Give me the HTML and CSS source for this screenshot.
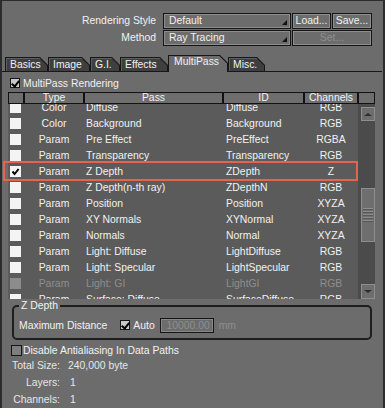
FILE: index.html
```html
<!DOCTYPE html>
<html lang="en">
<head>
    <meta charset="UTF-8">
    <title>Render Options</title>
    <link rel="stylesheet" href="styles.css">
</head>
<body>
    <div class="window">
        <div class="style-box">
            <div class="setting-row">
                <span class="setting-label">Rendering Style</span>
                <div class="select"><span>Default</span><span class="drop"></span></div>
                <button class="btn">Load...</button>
                <button class="btn save">Save...</button>
            </div>
            <div class="setting-row">
                <span class="setting-label">Method</span>
                <div class="select"><span>Ray Tracing</span><span class="drop"></span></div>
                <button class="btn set" disabled>Set...</button>
            </div>
        </div>

        <div class="tabs">
            <div class="tab first" style="width:43px"><span>Basics</span></div>
            <div class="tab" style="width:42px"><span>Image</span></div>
            <div class="tab" style="width:30px"><span>G.I.</span></div>
            <div class="tab" style="width:48px"><span>Effects</span></div>
            <div class="tab active" style="width:60px"><span>MultiPass</span></div>
            <div class="tab" style="width:37px"><span>Misc.</span></div>
        </div>

        <div class="check-row multipass">
            <span class="check on"></span>
            <span>MultiPass Rendering</span>
        </div>

        <div class="table">
            <div class="thead">
                <div class="th"></div>
                <div class="th">Type</div>
                <div class="th">Pass</div>
                <div class="th">ID</div>
                <div class="th">Channels</div>
                <div class="th"></div>
            </div>
            <div class="tbody">
                <div class="list-view">
                    <div class="rows" id="rows"></div>
                </div>
                <div class="scrollbar">
                    <div class="sb-btn up"><span></span></div>
                    <div class="thumb"><span class="grip"></span></div>
                    <div class="sb-btn down"><span></span></div>
                </div>
            </div>
            <div class="highlight"></div>
        </div>

        <fieldset class="group">
            <legend>Z Depth</legend>
            <div class="distance-row">
                <span>Maximum Distance</span>
                <span class="check on auto-check"></span>
                <span class="auto-label">Auto</span>
                <span class="num-input">10000.00</span>
                <span class="unit">mm</span>
            </div>
        </fieldset>

        <div class="check-row antialias">
            <span class="check off"></span>
            <span>Disable Antialiasing In Data Paths</span>
        </div>

        <div class="info">
            <div class="info-row"><span class="info-label">Total Size:</span><span>240,000 byte</span></div>
            <div class="info-row"><span class="info-label">Layers:</span><span class="info-num">1</span></div>
            <div class="info-row"><span class="info-label">Channels:</span><span class="info-num">1</span></div>
        </div>
    </div>

    <script>
        let passes = [
            ["Color", "Diffuse", "Diffuse", "RGB"],
            ["Color", "Background", "Background", "RGB"],
            ["Param", "Pre Effect", "PreEffect", "RGBA"],
            ["Param", "Transparency", "Transparency", "RGB"],
            ["Param", "Z Depth", "ZDepth", "Z", "checked"],
            ["Param", "Z Depth(n-th ray)", "ZDepthN", "RGB"],
            ["Param", "Position", "Position", "XYZA"],
            ["Param", "XY Normals", "XYNormal", "XYZA"],
            ["Param", "Normals", "Normal", "XYZA"],
            ["Param", "Light: Diffuse", "LightDiffuse", "RGB"],
            ["Param", "Light: Specular", "LightSpecular", "RGB"],
            ["Param", "Light: GI", "LightGI", "RGB", "disabled"],
            ["Param", "Surface: Diffuse", "SurfaceDiffuse", "RGB"]
        ];
        let checkSvg = '<svg width="11" height="11" viewBox="0 0 11 11"><path d="M2.5 5.5 L4.6 8 L8.6 3" stroke="#000" stroke-width="2" fill="none"/></svg>';
        let rows = document.getElementById("rows");

        passes.forEach(p => {
            let row = document.createElement("div");
            row.className = "row" + (p[4] === "disabled" ? " disabled" : "");
            row.innerHTML =
                '<div class="cell-check"><span class="box">' + (p[4] === "checked" ? checkSvg : "") + '</span></div>' +
                '<div class="cell-type">' + p[0] + '</div>' +
                '<div class="cell-pass">' + p[1] + '</div>' +
                '<div class="cell-id">' + p[2] + '</div>' +
                '<div class="cell-ch">' + p[3] + '</div>';
            rows.appendChild(row);
        });
    </script>
</body>
</html>
```

FILE: styles.css
```css
* {
    margin: 0;
    padding: 0;
    box-sizing: border-box;
}

body {
    background: #6c6c6c;
    font-family: 'Liberation Sans', Arial, sans-serif;
    font-size: 10.4px;
    color: #f2f2f2;
}

.window {
    width: 385px;
    height: 408px;
    background: #6c6c6c;
    border-top: 1px solid #2c2c2c;
    border-left: 2px solid #2c2c2c;
    border-right: 2px solid #2c2c2c;
    overflow: hidden;
}

/* top settings */
.style-box {
    padding-top: 12px;
    display: flex;
    flex-direction: column;
    gap: 1px;
}

.setting-row {
    display: flex;
    height: 16px;
}

.setting-label {
    width: 155px;
    padding-right: 1px;
    text-align: right;
    line-height: 16px;
}

.select {
    margin-left: 6px;
    width: 128px;
    display: flex;
    border: 1px solid #141414;
    box-shadow: inset 0 0 0 1px #8e8e8e;
    padding: 0 3px 3px 5px;
    line-height: 14px;
}

.drop {
    margin-left: auto;
    align-self: flex-end;
    width: 0;
    height: 0;
    border-left: 5px solid transparent;
    border-bottom: 5px solid #111;
}

.btn {
    margin-left: 1px;
    width: 39px;
    height: 16px;
    border: 1px solid #141414;
    box-shadow: inset 0 0 0 1px #8e8e8e;
    background: #6c6c6c;
    color: #f2f2f2;
    font: inherit;
    line-height: 14px;
    text-align: center;
}

.btn.save {
    width: 40px;
}

.btn.set {
    width: 80px;
    color: #8e8e8e;
}

/* tabs */
.tabs {
    display: flex;
    align-items: flex-end;
    margin-top: 9px;
    margin-right: 1px;
    padding-left: 3px;
    height: 17px;
    border-bottom: 1px solid #181818;
}

.tab {
    height: 14px;
    background: #161616;
    padding: 1px 1px 0 1px;
    clip-path: polygon(0 0, calc(100% - 8px) 0, 100% 8px, 100% 100%, 0 100%);
}

.tab span {
    display: block;
    height: 100%;
    background: #3f3f3f;
    box-shadow: inset 1px 1px 0 #5e5e5e;
    clip-path: polygon(0 0, calc(100% - 7.6px) 0, 100% 7.6px, 100% 100%, 0 100%);
    padding-left: 4px;
    line-height: 13px;
}

.tab.active {
    height: 17px;
    margin-bottom: -1px;
}

.tab.active span {
    background: #6c6c6c;
    box-shadow: none;
    line-height: 12px;
    padding-left: 5px;
}

/* checkboxes */
.check-row {
    display: flex;
    align-items: center;
}

.check {
    width: 10px;
    height: 10px;
    border: 1px solid #161616;
    margin-right: 3px;
    position: relative;
}

.check.on {
    background: #c8c8c8;
}

.check.on::after {
    content: "";
    position: absolute;
    left: 2px;
    top: 0px;
    width: 3px;
    height: 6px;
    border-right: 2px solid #000;
    border-bottom: 2px solid #000;
    transform: rotate(40deg);
}

.check.off {
    background: #7e7e7e;
}

.multipass {
    margin-top: 5px;
    height: 12px;
    padding-left: 8px;
}

/* pass table */
.table {
    position: relative;
    margin-top: 3px;
    margin-left: 6px;
    width: 367px;
}

.thead {
    display: grid;
    grid-template-columns: 16px 60px 139px 81px 54px 17px;
    height: 12px;
}

.th {
    border: 1px solid #121212;
    text-align: center;
    line-height: 10px;
    background: #6e6e6e;
}

.tbody {
    display: flex;
    height: 195px;
}

.list-view {
    width: 350px;
    overflow: hidden;
    background: #5b5b5b;
}

.rows {
    margin-top: -5px;
}

.row {
    display: grid;
    grid-template-columns: 16px 60px 139px 81px 54px;
    height: 16px;
    align-items: center;
}

.row.disabled {
    color: #8e8e8e;
}

.cell-check {
    padding-left: 2px;
    display: flex;
}

.box {
    width: 11px;
    height: 11px;
    background: #f4f4f4;
    display: block;
}

.box svg {
    display: block;
}

.row.disabled .box {
    background: #8c8c8c;
}

.cell-type,
.cell-ch {
    text-align: center;
}

.cell-pass {
    padding-left: 2px;
}

.cell-id {
    padding-left: 3px;
}

.scrollbar {
    width: 17px;
    background: #4b4b4b;
    display: flex;
    flex-direction: column;
    padding: 3px 0 0 3px;
}

.sb-btn {
    width: 14px;
    height: 14px;
    background: #6e6e6e;
    border: 1px solid #8e8e8e;
    display: flex;
    align-items: center;
    justify-content: center;
}

.sb-btn span {
    width: 0;
    height: 0;
    border-left: 4px solid transparent;
    border-right: 4px solid transparent;
}

.sb-btn.up span {
    border-bottom: 3px solid #2e2e2e;
}

.sb-btn.down {
    margin-top: auto;
    height: 15px;
}

.sb-btn.down span {
    border-top: 3px solid #2e2e2e;
}

.thumb {
    margin-top: 67px;
    width: 14px;
    height: 54px;
    background: #6e6e6e;
    border: 1px solid #8e8e8e;
    display: flex;
    align-items: center;
    justify-content: center;
}

.grip {
    width: 10px;
    height: 14px;
    background: repeating-linear-gradient(#8e8e8e 0 1px, #575757 1px 2px, transparent 2px 3px);
}

.highlight {
    position: absolute;
    top: 69px;
    left: -5px;
    width: 355px;
    height: 20px;
    border: 2px solid #e6634c;
}

/* z depth group */
.group {
    margin: 1px 0 0 10px;
    width: 360px;
    border: 2px solid #1e1e1e;
    border-radius: 5px;
    padding: 5px 6px 5px 5px;
}

.group legend {
    padding: 0 2px;
    line-height: 12px;
}

.distance-row {
    display: flex;
    align-items: center;
    height: 16px;
}

.auto-check {
    margin-left: 13px;
}

.num-input {
    margin-left: 5px;
    width: 54px;
    height: 15px;
    border: 1px solid #151515;
    box-shadow: inset 0 0 0 1px #888;
    color: #8e8e8e;
    text-align: right;
    padding-right: 3px;
    line-height: 13px;
}

.unit {
    margin-left: 5px;
    color: #8e8e8e;
}

.antialias {
    margin-top: 4px;
    height: 12px;
    padding-left: 9px;
}

.antialias .check {
    width: 11px;
    height: 11px;
    margin-right: 1px;
}

/* totals */
.info {
    margin-top: 1px;
    color: #e6e6e6;
}

.info-row {
    display: flex;
    height: 17px;
    line-height: 17px;
    padding-left: 9px;
}

.info-label {
    width: 49px;
    text-align: right;
    margin-right: 8px;
}

.info-num {
    margin-left: 2px;
}
```
